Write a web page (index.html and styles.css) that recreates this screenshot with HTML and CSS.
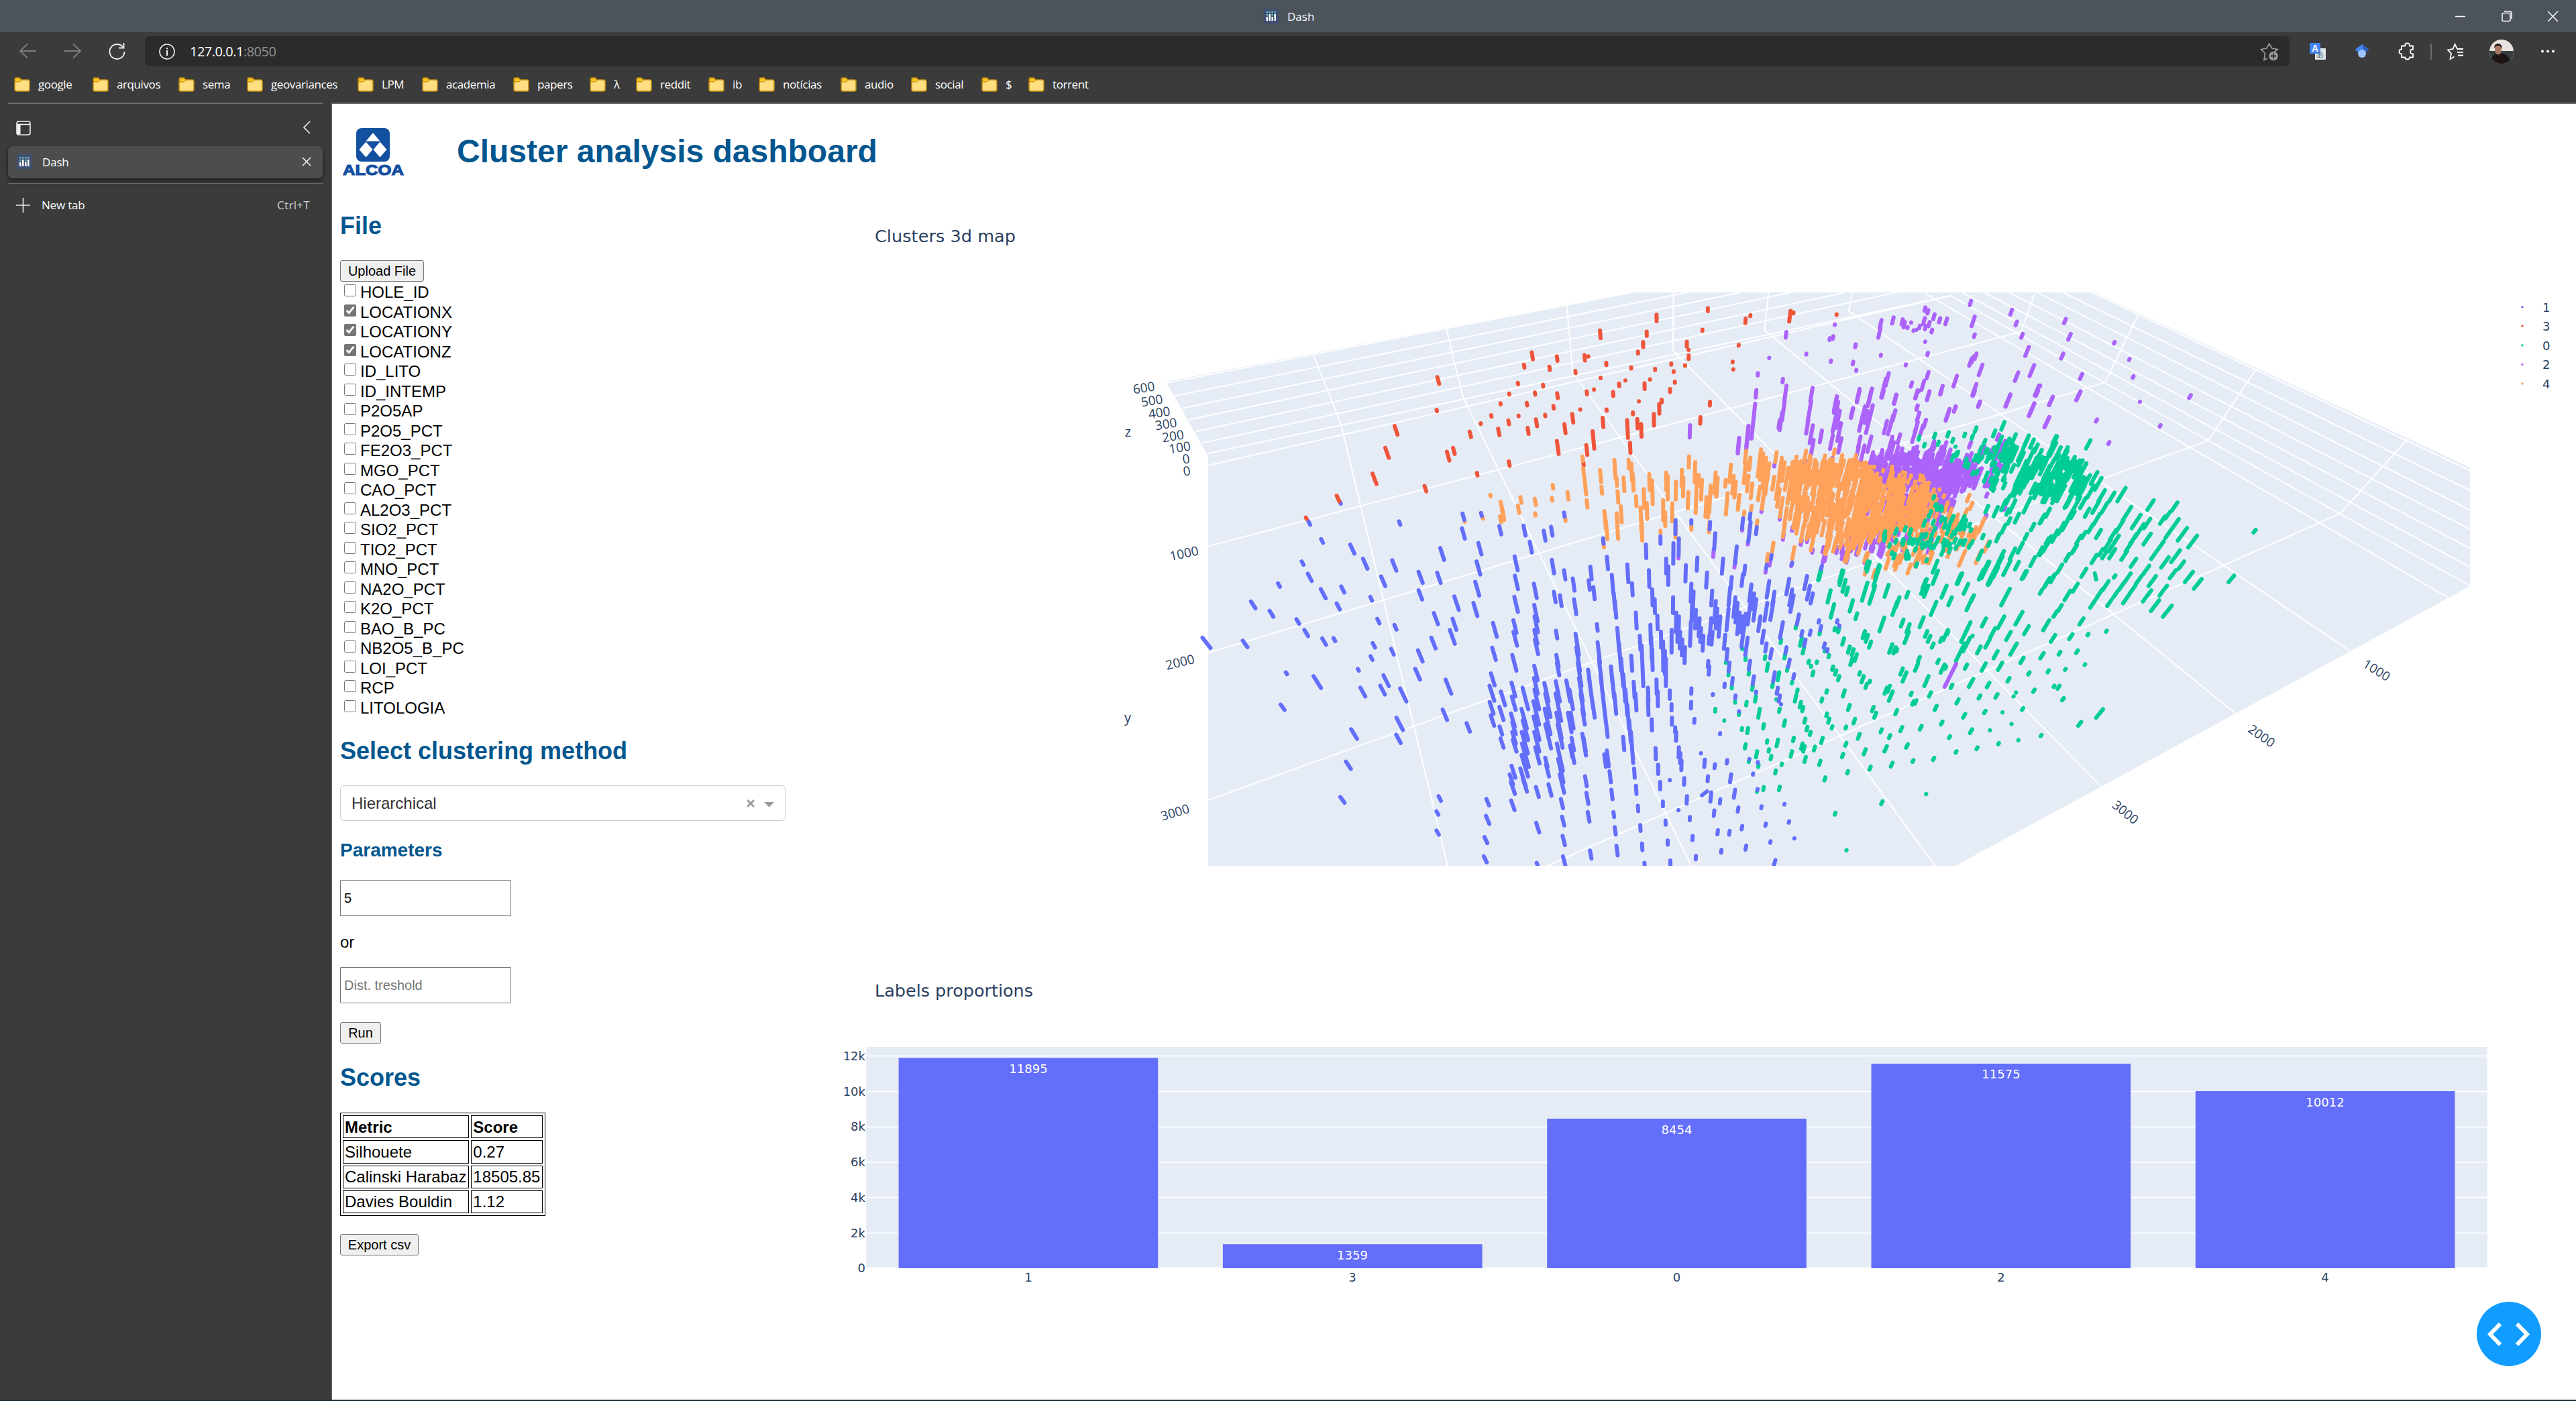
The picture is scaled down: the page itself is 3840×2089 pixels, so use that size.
FILE: index.html
```html
<!DOCTYPE html>
<html lang="en">
<head>
<meta charset="utf-8">
<title>Dash</title>
<link rel="stylesheet" href="styles.css">
</head>
<body>
<svg class="defs" width="0" height="0">
  <symbol id="folder" viewBox="0 0 24 22"><path d="M1 3.5Q1 1 3 1h5l3 3h9.500q2.500 0 2.500 2.500v12q0 2.500-2.500 2.500h-17Q1 21 1 18.500z" fill="#ffdf82" stroke="#c08a0c" stroke-width="1.500"/><path d="M1.500 6V3.500Q1.500 1.500 3.500 1.500H8l3 3L8.500 7H2z" fill="#ffca28" stroke="#b07c00" stroke-width="1"/></symbol>
  <symbol id="dash" viewBox="0 0 22 22"><rect width="22" height="22" rx="1" fill="#3f4f75"/><g fill="#6bb8a8"><rect x="4" y="4" width="2.500" height="2.500"/><rect x="8" y="4" width="2.500" height="2.500"/><rect x="12" y="4" width="2.500" height="2.500"/><rect x="16" y="4" width="2.500" height="2.500"/><rect x="4" y="8" width="2.500" height="2.500"/><rect x="12" y="8" width="2.500" height="2.500"/></g><g fill="#fff"><rect x="4" y="12" width="2.500" height="6"/><rect x="8" y="8" width="2.500" height="10"/><rect x="12" y="12" width="2.500" height="6"/><rect x="16" y="8" width="2.500" height="10"/></g></symbol>
</svg>
<header class="titlebar">
  <span class="win-title"><svg width="23" height="22"><use href="#dash"/></svg>Dash</span>
  <svg class="win-buttons" width="160" height="20" viewBox="3657 13 160 20" fill="none" stroke="#fff" stroke-width="1.500"><path d="M3660 23.500h15M3798 16l15 15M3813 16l-15 15"/><rect x="3730" y="18.500" width="12" height="12" rx="2"/><path d="M3733 16h8q3 0 3 3v8"/></svg>
</header>
<nav class="toolbar">
  <svg class="nav-icons" width="188" height="46" viewBox="0 54 188 46" fill="none" stroke="#f2f2f2" stroke-width="1.800"><g stroke="#7d7d7d"><path d="M41 65.500L30 76l11 10.500M30 76h24M109 65.500L120 76l-11 10.500M120 76H96"/></g><path d="M183 70a11 11 0 1 0 2.500 7M184.500 64v7.500H177"/></svg>
  <div class="address">
    <svg width="24" height="24" viewBox="0 0 24 24" fill="none" stroke="#f2f2f2" stroke-width="1.600"><circle cx="12" cy="12" r="11"/><path d="M12 10v8M12 6v2.200" stroke-width="2"/></svg>
    <span class="url">127.0.0.1<i>:8050</i></span>
    <svg class="fav" width="28" height="28" viewBox="3369 63 28 28"><path d="M3390 76l5-4.500-8-1.300-4.500-7L3379 70l-8.500 1.500 6 6-1.500 10 5-2.500" transform="translate(0 2)" fill="none" stroke="#9a9a9a" stroke-width="1.700"/><circle cx="3389" cy="83.500" r="6.800" fill="#9a9a9a"/><path d="M3385 83.500h8M3389 79.500v8" stroke="#2b2b2b" stroke-width="1.800"/></svg>
  </div>
  <svg class="actions" width="427" height="46" viewBox="3413 54 427 46">
    <rect x="3451" y="72" width="16" height="17" rx="1" fill="#dfe3e6"/><rect x="3443" y="64" width="16" height="16" rx="1" fill="#4285f4"/>
    <text x="3446" y="77" font-size="14" font-weight="700" fill="#fff" font-family="Liberation Sans, sans-serif">A</text><text x="3453" y="86" font-size="11" fill="#4d7184" font-family="Noto Sans CJK JP, sans-serif">あ</text>
    <path d="M3521 66l10.500 8-10.500 8-10.500-8z" fill="#4285f4"/><path d="M3521 66l10.500 8-6 5z" fill="#2f62c0"/><circle cx="3521" cy="80" r="6" fill="#a0c3ff"/>
    <path d="M3580 69h5q0-4 3.500-4t3.500 4h5v5q-4 0-4 3.500t4 3.500v5h-5q0 3-3.500 3t-3.500-3h-5v-5q-3.500 0-3.500-3.500t3.500-3.500z" transform="translate(0 -.5)" fill="none" stroke="#fff" stroke-width="1.800"/>
    <path d="M3624 65v24" stroke="#6c6c6c" stroke-width="2"/>
    <path d="M3668 73h-5l-3.500-7-3 7-7.500 1.500 5 5.500-1.500 8 6-3.500M3664 73h8M3663 78h9M3664 82.500h8" fill="none" stroke="#fff" stroke-width="1.800"/>
    <clipPath id="av"><circle cx="3729" cy="77" r="18"/></clipPath>
    <g clip-path="url(#av)"><rect x="3711" y="59" width="36" height="36" fill="#e9e2de"/><rect x="3711" y="76" width="36" height="20" fill="#35403e"/><path d="M3713 96q0-15 10-16h9q10 3 10 16z" fill="#1d1513"/><ellipse cx="3724" cy="74" rx="5" ry="8" fill="#a97862"/><path d="M3718 72q0-7 6-7t5.500 8q-2-5-5.500-5t-6 4zM3720 79q4 5 8 0v5h-8z" fill="#231a17"/></g>
    <g fill="#fff"><circle cx="3790" cy="76.500" r="2"/><circle cx="3798" cy="76.500" r="2"/><circle cx="3806" cy="76.500" r="2"/></g>
  </svg>
</nav>
<nav class="bookmarks">
  <a><svg><use href="#folder"/></svg>google</a><a><svg><use href="#folder"/></svg>arquivos</a><a><svg><use href="#folder"/></svg>sema</a><a><svg><use href="#folder"/></svg>geovariances</a><a><svg><use href="#folder"/></svg>LPM</a><a><svg><use href="#folder"/></svg>academia</a><a><svg><use href="#folder"/></svg>papers</a><a><svg><use href="#folder"/></svg>λ</a><a><svg><use href="#folder"/></svg>reddit</a><a><svg><use href="#folder"/></svg>ib</a><a><svg><use href="#folder"/></svg>notícias</a><a><svg><use href="#folder"/></svg>audio</a><a><svg><use href="#folder"/></svg>social</a><a><svg><use href="#folder"/></svg>$</a><a><svg><use href="#folder"/></svg>torrent</a>
</nav>
<div class="window">
  <aside class="tabs">
    <div class="tabs-head">
      <svg width="22" height="22" viewBox="0 0 22 22" fill="none" stroke="#f0f0f0" stroke-width="1.600"><rect x="1" y="1" width="20" height="20" rx="3"/><path d="M1 5.500h20"/><path d="M4 5v15" stroke-width="5"/></svg>
      <svg width="12" height="20" fill="none" stroke="#e8e8e8" stroke-width="1.700"><path d="M11 1L2 10l9 9"/></svg>
    </div>
    <div class="tab"><svg width="22" height="22"><use href="#dash"/></svg><span>Dash</span><svg class="x" width="14" height="14" stroke="#f0f0f0" stroke-width="1.700"><path d="M1 1l12 12M13 1L1 13"/></svg></div>
    <div class="newtab"><svg width="21" height="22" stroke="#eee" stroke-width="1.600"><path d="M10.500 0v22M0 11h21"/></svg><span>New tab</span><em>Ctrl+T</em></div>
  </aside>
  <main class="page">
    <div class="page-head">
      <svg class="logo" width="96" height="76" viewBox="509 190 96 76"><rect x="531" y="191" width="50" height="50" rx="8" fill="#1450a0"/><path d="M556 198l10.500 12.500h-21zM545.500 211.500l10 11.500-10 11.500-10-11.500zM566.500 211.500l10 11.500-10 11.500-10-11.500z" fill="#fff"/><text x="511" y="260.500" textLength="91" lengthAdjust="spacingAndGlyphs" font-size="22" stroke="#1450a0" stroke-width="1.200" fill="#1450a0">ALCOA</text></svg>
      <h1>Cluster analysis dashboard</h1>
    </div>
    <div class="columns">
      <section class="controls">
        <h2>File</h2>
        <button class="upload">Upload File</button>
        <div class="checks">
          <label><input type="checkbox">HOLE_ID</label><label><input type="checkbox" checked>LOCATIONX</label><label><input type="checkbox" checked>LOCATIONY</label><label><input type="checkbox" checked>LOCATIONZ</label><label><input type="checkbox">ID_LITO</label><label><input type="checkbox">ID_INTEMP</label><label><input type="checkbox">P2O5AP</label><label><input type="checkbox">P2O5_PCT</label><label><input type="checkbox">FE2O3_PCT</label><label><input type="checkbox">MGO_PCT</label><label><input type="checkbox">CAO_PCT</label><label><input type="checkbox">AL2O3_PCT</label><label><input type="checkbox">SIO2_PCT</label><label><input type="checkbox">TIO2_PCT</label><label><input type="checkbox">MNO_PCT</label><label><input type="checkbox">NA2O_PCT</label><label><input type="checkbox">K2O_PCT</label><label><input type="checkbox">BAO_B_PC</label><label><input type="checkbox">NB2O5_B_PC</label><label><input type="checkbox">LOI_PCT</label><label><input type="checkbox">RCP</label><label><input type="checkbox">LITOLOGIA</label>
        </div>
        <h2 class="method">Select clustering method</h2>
        <div class="select"><span>Hierarchical</span><svg width="42" height="16" viewBox="0 0 42 16"><path d="M2 3l10 10M12 3L2 13" stroke="#999" stroke-width="2.600"/><path d="M27 6h15l-7.500 7.500z" fill="#999"/></svg></div>
        <h3>Parameters</h3>
        <input class="field" value="5">
        <p>or</p>
        <input class="field" placeholder="Dist. treshold">
        <button class="run">Run</button>
        <h2 class="scores">Scores</h2>
        <table>
          <tr><th>Metric</th><th>Score</th></tr>
          <tr><td>Silhouete</td><td>0.27</td></tr>
          <tr><td>Calinski Harabaz</td><td>18505.85</td></tr>
          <tr><td>Davies Bouldin</td><td>1.12</td></tr>
        </table>
        <button class="export">Export csv</button>
      </section>
      <section class="charts">
        <svg class="map" width="2640" height="1120" viewBox="1200 316 2640 1120">
          <text x="1304" y="361" class="title" textLength="210">Clusters 3d map</text>
          <clipPath id="scene"><rect x="1600" y="436" width="2200" height="855"/></clipPath>
          <path d="M1738 569L2429 436H3122L3682 697V874L2915 1291H1801V680z" fill="#e5ecf6"/>
          <g id="grid" clip-path="url(#scene)" stroke="#fff" stroke-width="2" fill="none">
            <path d="M1739 571L2432 436M1750 590.500L2516 436M1761.500 609L2594.500 436M1771.500 626L2670 436M1782 643.500L2751 436M1792 660.500L2827 436M1801 676L2908 441L3137 570.500L3292 657L3488 766L3682 873.500"/>
            <path d="M1957 527.500L1998.500 631L2158 1291M2155.500 488.500L2181 592L2521 1291M2335.500 456L2344.500 556L2885 1291M2494.500 436L2494 523L3132 1172.500M2636.500 436L2630.500 492.500L3332.500 1064M2760.500 436L2756 464L3503.500 971M2871 436V438.500L3040 536.500L3651 892"/>
            <path d="M1801 694L2908 441M1801 814.500L3013 494.500L3033 438M1801 973.500L3137.500 570.500L3188 468M1801 1193L3292 657L3364 549M2300 1294L3488 766L3589.500 654"/>
            <path d="M3118 436L3682 701.500M3075 436L3682 731M3037 436L3682 760.500M2995 436L3682 789M2958 436L3682 817.500M2925 436L3682 845.500"/>
          </g>
          <g id="traces" clip-path="url(#scene)" fill="none" stroke-linecap="round" stroke-width="6"></g>
          <g class="tick3d">
            <text transform="translate(1705 578) rotate(-9)" dy="7">600</text><text transform="translate(1717 597) rotate(-9)" dy="7">500</text><text transform="translate(1728 615) rotate(-9)" dy="7">400</text><text transform="translate(1738 632) rotate(-9)" dy="7">300</text><text transform="translate(1748.500 650) rotate(-9)" dy="7">200</text><text transform="translate(1758.500 667) rotate(-9)" dy="7">100</text><text transform="translate(1768 684) rotate(-9)" dy="7">0</text><text transform="translate(1769 702) rotate(-9)" dy="7">0</text>
            <text transform="translate(1765 825) rotate(-12)" dy="7">1000</text><text transform="translate(1759 987) rotate(-14)" dy="7">2000</text><text transform="translate(1751.500 1211) rotate(-17)" dy="7">3000</text>
            <text transform="translate(3543 999) rotate(32)" dy="7">1000</text><text transform="translate(3371.500 1097) rotate(35)" dy="7">2000</text><text transform="translate(3168.500 1211) rotate(39)" dy="7">3000</text>
            <text x="1681.500" y="651" font-size="20">z</text><text x="1681" y="1077" font-size="20">y</text>
          </g>
          <circle cx="3760" cy="458" r="1.700" fill="#636efa"/><circle cx="3760" cy="486" r="1.700" fill="#ef553b"/><circle cx="3760" cy="515" r="1.700" fill="#00cc96"/><circle cx="3760" cy="543.500" r="1.700" fill="#ab63fa"/><circle cx="3760" cy="572" r="1.700" fill="#ffa15a"/>
          <g class="tick"><text x="3790" y="465">1</text><text x="3790" y="493">3</text><text x="3790" y="522">0</text><text x="3790" y="550">2</text><text x="3790" y="579">4</text></g>
        </svg>
        <svg class="bars" width="2640" height="560" viewBox="1200 1436 2640 560">
          <text x="1304" y="1486" class="title" textLength="236">Labels proportions</text>
          <rect x="1291.300" y="1561" width="2416.500" height="330" fill="#e5ecf6"/>
          <path d="M1291 1574.500H3708M1291 1627.500H3708M1291 1680.500H3708M1291 1733H3708M1291 1785.500H3708M1291 1838.500H3708M1291 1890.500H3708" stroke="#fff" stroke-width="1.500"/>
          <g fill="#636efa"><rect x="1339.600" y="1577.500" width="386.600" height="313.500"/><rect x="1822.900" y="1855.200" width="386.600" height="35.800"/><rect x="2306.200" y="1668" width="386.600" height="223"/><rect x="2789.500" y="1586" width="386.600" height="305"/><rect x="3272.800" y="1627" width="386.600" height="264"/></g>
          <g class="tick" text-anchor="end"><text x="1290" y="1581">12k</text><text x="1290" y="1634">10k</text><text x="1290" y="1686">8k</text><text x="1290" y="1739">6k</text><text x="1290" y="1792">4k</text><text x="1290" y="1845">2k</text><text x="1290" y="1897">0</text></g>
          <g class="tick" text-anchor="middle"><text x="1533" y="1911">1</text><text x="2016" y="1911">3</text><text x="2499.500" y="1911">0</text><text x="2983" y="1911">2</text><text x="3466" y="1911">4</text></g>
          <g class="tick value" text-anchor="middle"><text x="1533" y="1600">11895</text><text x="2016" y="1878">1359</text><text x="2499.500" y="1691">8454</text><text x="2983" y="1608">11575</text><text x="3466" y="1650">10012</text></g>
        </svg>
      </section>
    </div>
    <button class="devtools" aria-label="Developer tools"><svg width="96" height="96" fill="none" stroke="#fff" stroke-width="6"><path d="M35 33L20 48.500L35 64M60 33L75 48.500L60 64"/></svg></button>
  </main>
</div>
<div class="taskbar"></div>
<script src="traces.js"></script>
</body>
</html>
```
FILE: styles.css
```css
* { box-sizing: border-box; }
body { margin: 0; width: 3840px; height: 2089px; overflow: hidden; display: flex; flex-direction: column; background: #3b3b3b; font-family: "Liberation Sans", Arial, sans-serif; font-size: 24px; color: #000; }
.defs { position: absolute; }
.titlebar { height: 48px; flex: none; background: #4c535a; display: flex; align-items: center; justify-content: space-between; padding: 0 23px 0 1883px; color: #fff; font: 17px "Open Sans", sans-serif; }
.win-title { display: flex; align-items: center; gap: 13px; }
.toolbar { height: 57px; flex: none; display: flex; align-items: flex-start; padding-top: 6px; }
.nav-icons { margin-right: 28px; flex: none; }
.address { width: 3197px; height: 45px; flex: none; background: #2b2b2b; border-radius: 7px; display: flex; align-items: center; padding: 0 16px 0 21px; font: 20px "Open Sans", sans-serif; color: #fff; }
.url { margin-left: 22px; letter-spacing: -.5px; }
.url i { color: #919191; font-style: normal; }
.fav { margin-left: auto; }
.bookmarks { height: 48px; flex: none; display: grid; grid-template-columns: 117px 128px 102px 165px 96px 136px 114px 69px 108px 75px 122px 105px 105px 70px 110px; padding: 6px 0 0 21px; align-items: start; font: 17px/30px "Open Sans", sans-serif; letter-spacing: -.4px; color: #fff; }
.bookmarks a { display: flex; align-items: center; gap: 12px; white-space: nowrap; }
.bookmarks svg { width: 24px; height: 22px; flex: none; }
.window { flex: 1; display: flex; min-height: 0; }
.tabs { width: 495px; flex: none; padding: 0 13px 0 12px; font: 17px "Open Sans", sans-serif; color: #fff; border-right: 1px solid #6b6b6b; letter-spacing: -.2px; }
.tabs-head { height: 65px; border-top: 2px solid #6b6b6b; display: flex; justify-content: space-between; padding: 25px 18px 0 12px; }
.tab { height: 48px; background: #4d4d4d; border-radius: 7px; box-shadow: 0 3px 6px #1d1d1d; display: flex; align-items: center; padding: 0 17px 2px 13px; }
.tab span { margin-left: 16px; }
.tab .x { margin-left: auto; }
.newtab { margin-top: 7px; border-top: 1px solid #6b6b6b; height: 64px; display: flex; align-items: center; padding: 0 19px 0 12px; }
.newtab span { margin-left: 17px; }
.newtab em { margin-left: auto; font-style: normal; color: #cfcfcf; letter-spacing: .3px; }
.page { position: relative; flex: 1; background: #fff; border-top: 2px solid #6b6b6b; padding-left: 12px; }
.page-head { height: 161px; display: flex; align-items: flex-start; padding: 35px 0 0 2px; }
.logo { flex: none; margin-right: 76px; font-family: "Liberation Sans", sans-serif; font-weight: 700; }
h1, h2, h3 { margin: 0; color: #00568f; font-weight: 700; }
h1 { font-size: 48px; line-height: 56px; margin-top: 8px; }
h2 { font-size: 36px; line-height: 42px; }
h3 { font-size: 28px; line-height: 32px; margin: 28px 0 28px; }
.columns { display: flex; }
.controls { width: 693px; flex: none; display: flex; flex-direction: column; align-items: flex-start; }
button { font: 20px "Liberation Sans", sans-serif; color: #000; background: #efefef; border: 1.500px solid #767676; border-radius: 3px; height: 32px; padding: 0; line-height: 28px; }
.upload { width: 125px; margin: 30px 0 1px; }
.checks label { display: flex; align-items: center; height: 29.500px; line-height: 29.500px; }
.checks input { width: 18px; height: 18px; margin: 0 6px 5px; accent-color: #767676; }
.method { margin: 29px 0 30px; }
.select { width: 664px; height: 53px; border: 1.500px solid #ccc; border-radius: 6px; display: flex; align-items: center; justify-content: space-between; padding: 0 16px; color: #333; }
.field { width: 255px; height: 54px; border: 1.500px solid #767676; border-radius: 1px; padding: 0 5px; font: 20px "Liberation Sans", sans-serif; color: #000; }
.field::placeholder { color: #757575; }
p { margin: 25px 0 23px; line-height: 28px; }
.run { width: 61px; margin: 28px 0 30px; }
table { width: 306px; height: 154px; margin: 31px 0 27px; border: 1px solid #000; border-spacing: 3px; white-space: nowrap; }
th, td { border: 1px solid #000; padding: 1px 2px; text-align: left; line-height: 27px; }
.export { width: 117px; }
.charts { width: 2640px; flex: none; display: flex; flex-direction: column; }
.charts svg { flex: none; display: block; }
.title { font: 25.500px "DejaVu Sans", Verdana, sans-serif; fill: #2a3f5f; }
.tick { font: 18px "DejaVu Sans", Verdana, sans-serif; fill: #2a3f5f; }
.value { fill: #fff; }
.tick3d { font: 19px "Open Sans", sans-serif; fill: #2a3f5f; text-anchor: middle; }
.devtools { position: absolute; right: 52px; bottom: 50px; width: 96px; height: 96px; border: 0; border-radius: 50%; background: #119dff; }
.devtools svg { display: block; }
.taskbar { height: 2px; flex: none; background: #1b2c38; }
```
FILE: traces.js
```js
// Drill-hole intervals, stored as "x yTop yBottom" triples per scene tile.
// Each tile has its own origin and horizontal / vertical scale.
const tiles = {
  west: [1640, 400, 2.24, 1.7422],
  mid: [2340, 400, 2.24, 1.7422],
  east: [3040, 400, 1.96, 1.7422],
  core: [2590, 580, 3, 3]
};
const colors = { blue: '#636efa', red: '#ef553b', green: '#00cc96', purple: '#ab63fa', orange: '#ffa15a' };
// All vertical holes converge on this point of the projection.
const VX = 2485, VY = 1850, CAP = 2.6;

function segment(tile, x, a, b) {
  const [ox, oy, sx, sy] = tiles[tile];
  const cx = ox + x / sx;
  let y1 = oy + a / sy + CAP, y2 = oy + b / sy - CAP;
  if (y2 < y1 + 0.3) { y1 = (y1 + y2) / 2; y2 = y1 + 0.3; }
  const cy = (y1 + y2) / 2, k = (VX - cx) / (VY - cy);
  return `M${(cx + (y1 - cy) * k).toFixed(1)} ${y1.toFixed(1)}L${(cx + (y2 - cy) * k).toFixed(1)} ${y2.toFixed(1)}`;
}
function add(color, d) {
  const p = document.createElementNS('http://www.w3.org/2000/svg', 'path');
  p.setAttribute('stroke', colors[color]);
  p.setAttribute('d', d);
  document.getElementById('traces').appendChild(p);
}
function draw(tile, color, text) {
  add(color, text.split(',').map(s => segment(tile, ...s.trim().split(' ').map(Number))).join(''));
}
let seed = 11;
const rnd = () => (seed = (seed * 16807) % 2147483647) / 2147483647;
function inside(x, y, poly) {
  let r = false;
  for (let i = 0, j = poly.length - 1; i < poly.length; j = i++) {
    const [xi, yi] = poly[i], [xj, yj] = poly[j];
    if ((yi > y) !== (yj > y) && x < (xj - xi) * (y - yi) / (yj - yi) + xi) r = !r;
  }
  return r;
}
function fill(color, poly, count, min, max) {
  const xs = poly.map(p => p[0]), ys = poly.map(p => p[1]);
  const x0 = Math.min(...xs), x1 = Math.max(...xs), y0 = Math.min(...ys), y1 = Math.max(...ys);
  let d = '', n = 0;
  while (n < count) {
    const x = x0 + rnd() * (x1 - x0), y = y0 + rnd() * (y1 - y0);
    if (!inside(x, y, poly)) continue;
    const h = min + rnd() * (max - min);
    d += segment('core', x, y - h / 2, y + h / 2);
    n++;
  }
  add(color, d);
}

draw('west', 'orange', '1303 584 597,1342 602 645,1345 620 658,1337 640 664,1405 590 614,1397 612 640,1453 594 620,1453 632 647,1512 558 577,1509 592 608,1562 577 605,1217 650 663,1277 640 655,1553 640 661');
draw('west', 'blue', '802 602 616,698 652 671,741 699 718,842 713 746,1000 653 671,885 750 785,676 757 775,700 789 817,597 814 832,511 861 888,572 885 910,745 829 862,810 822 847,795 866 891,945 796 830,982 754 790,905 849 868,1142 722 762,1131 786 822,1070 784 822,1069 832 865,1213 633 658,1273 631 648,1213 671 707,1268 709 748,1263 757 800,1259 810 855,1253 865 908,1336 665 696,1417 664 699,1438 706 743,1484 677 712,1508 667 699,1550 630 650,1389 744 789,1390 794 838,1389 849 897,1453 815 861,1455 870 922,1456 900 950,1455 935 980,1457 960 1007,1512 753 797,1551 780 813,1518 836 872,1538 845 882,1524 937 966,1190 848 892,1121 891 929,1183 906 944,1176 935 980,1113 955 992,1069 988 1026,1060 1036 1073,929 906 927,986 922 943,914 969 990,976 984 1008,906 1003 1022,862 1036 1050,877 1085 1117,955 1053 1090,943 1080 1112,1012 1087 1130,1000 1163 1204,996 1207 1238,848 1193 1227,829 1277 1305,809 1369 1393,725 1055 1095,622 1045 1059,609 1129 1152,355 955 991,484 963 989,660 907 928,688 935 960,748 957 983,782 956 973,1163 1064 1110,1151 1142 1178,1229 1177 1208,1318 917 962,1315 981 1022,1311 1048 1088,1308 1080 1128,1307 1122 1162,1310 1157 1193,1345 1095 1140,1340 1135 1178,1338 1186 1216,1342 1217 1250,1385 910 952,1386 940 985,1383 1000 1050,1380 1072 1117,1381 1108 1152,1378 1152 1195,1382 1175 1215,1382 1200 1240,1384 1220 1260,1380 1288 1328,1373 1310 1345,1378 1330 1370,1378 1378 1412,1420 1085 1150,1416 1140 1200,1420 1170 1230,1418 1200 1265,1420 1230 1300,1418 1260 1325,1412 1295 1350,1418 1320 1364,1455 1028 1075,1455 1060 1110,1458 1090 1150,1456 1120 1190,1457 1160 1230,1458 1200 1260,1460 1240 1291,1460 1343 1378,1461 1436 1470,1460 1540 1560,1490 1073 1130,1495 1100 1170,1494 1140 1215,1496 1180 1252,1490 1267 1300,1494 1285 1325,1502 1336 1375,1527 1000 1040,1529 1020 1062,1528 1068 1130,1530 1100 1180,1532 1150 1225,1536 1180 1250,1535 1230 1310,1538 1270 1340,1542 1310 1367,1542 1374 1407,1546 1420 1452,1548 1470 1503,1550 1523 1560,1134 1367 1388,1126 1406 1424,1127 1456 1476,1294 1374 1400,1294 1418 1448,1288 1473 1498,1286 1523 1548,1563 1066 1130,1568 1150 1210');
draw('west', 'red', '1129 278 305,1124 363 376,988 405 437,958 462 497,916 529 565,1086 561 584,1162 472 504,1181 462 487,1236 420 443,1271 398 409,1306 377 390,1331 412 438,1337 346 358,1366 321 333,1364 391 410,1395 293 306,1397 378 389,1416 246 263,1443 214 241,1425 345 361,1429 410 435,1452 318 333,1457 388 415,1479 298 312,1486 376 389,1501 251 269,1526 224 245,1527 320 342,1514 353 369,1552 400 433,1528 444 487,1366 497 518,1259 527 543,794 586 610,688 643 656');
draw('mid', 'red', '461 99 116,290 116 142,257 160 180,245 187 209,102 157 186,50 221 244,62 224 234,19 262 277,122 241 256,228 212 226,205 253 265,186 288 295,165 295 311,145 317 336,103 280 290,81 310 320,57 315 332,35 362 372,250 294 318,268 284 293,285 257 269,231 341 350,211 370 384,123 362 375,111 384 417,10 374 405,79 419 473,57 455 489,193 390 445,226 387 420,239 400 442,281 374 413,307 337 353,299 348 382,335 309 326,351 290 302,347 263 274,339 243 255,385 247 258,397 207 217,391 186 208,397 222 240,443 155 167,587 126 147,603 117 129,735 106 143,747 110 122,891 115 126,564 194 206,544 238 249,546 258 267,468 342 361,436 382 408,202 449 484,46 500 517');
draw('mid', 'purple', '401 403 444,563 436 485,722 161 185,666 228 238,628 268 283,711 283 301,622 312 340,613 347 447,593 405 480,720 300 350,713 340 400,705 370 425,699 390 420,807 306 350,800 340 405,793 390 434,887 330 380,893 365 420,790 217 229,885 141 152,868 177 191,879 172 188,872 235 248,954 193 210,946 238 254,957 259 271,1039 220 232,1038 130 160,1034 150 185,1079 123 148,1110 128 150,1117 135 158,1128 148 160,1140 136 146,1148 157 167,1158 155 164,1168 145 160,1186 97 115,1196 104 122,1183 125 150,1188 145 163,1200 135 155,1216 115 137,1209 155 171,1235 125 145,1257 126 150,1187 186 196,1195 215 230,1122 245 257,1338 80 100,1347 121 155,1351 167 183,1345 225 250,1355 217 240,1338 230 258,1372 246 282,1287 275 312,1351 296 335,1367 342 364,1241 301 332,1195 265 290,1179 288 320,1158 312 342,1141 292 312,1197 315 347,1160 352 372,1262 362 398,1286 354 377,1474 103 125,1491 134 153,1510 166 185,1527 200 232,1543 247 285,1492 266 297,1463 323 364,1542 346 388,1560 300 335,1060 268 310,1048 282 340,963 309 350,1003 308 360,942 359 392,1086 324 356,480 725 754,363 745 758,551 755 782,576 670 686,595 705 722,668 755 777,654 780 795,740 765 778,848 740 768,773 700 722,926 745 769');
draw('core', 'purple', '44 158 270,5 212 296,330 155 250,335 220 300,373 178 246,438 25 105,445 50 120,450 90 180,432 120 200,455 145 240,420 200 276,458 212 292,540 0 68,590 0 85,513 78 137,563 70 150,575 90 160,552 110 195,597 65 150,583 120 205,650 0 46,706 18 74,700 88 150,685 110 210,662 135 206,812 0 18,800 0 50,853 5 55,910 0 32,803 67 100,808 98 150,800 140 200,790 170 245,838 130 180,824 155 210,940 82 150,972 72 108,1058 0 38,1080 48 88,1210 18 86,1340 0 38,1316 58 128,1402 28 80,1384 118 178,1525 5 58,545 205 270,535 250 330,560 245 330,590 205 290,600 275 340,640 265 340,685 205 280,690 230 320,665 270 340,722 195 250,710 250 330,800 250 290,870 225 300,925 230 300,1165 195 235,1100 250 290,1210 260 310,1080 280 340,1190 330 370,880 240 280,1040 230 270,300 310 355,422 300 350,165 330 355,1195 520 548,1110 555 588,1115 460 490,205 640 682,285 670 705,335 710 740,392 740 778,470 720 768,445 700 742,540 700 748,605 700 735,190 560 592,108 530 558,245 610 642,312 660 692,383 700 738,572 740 786');
fill('purple', [[580,330],[660,300],[800,295],[950,290],[1040,340],[1100,370],[1040,440],[960,460],[860,450],[560,400]], 215, 30, 85);
fill('purple', [[640,500],[1000,430],[960,560],[860,720],[640,730],[460,740],[480,600]], 130, 30, 70);
fill('purple', [[980,320],[1200,240],[1210,340],[1120,440],[1040,440]], 26, 30, 60);
draw('mid', 'orange', '43 484 505,46 515 540,52 540 592,58 598 626,103 520 560,107 563 590,151 494 550,157 540 570,161 575 613,197 493 525,207 503 555,212 530 582,181 539 583,222 588 622,118 626 680,123 650 708,158 632 675,160 660 707,172 614 664,238 617 690,241 650 712,248 569 627,258 605 656,266 530 580,276 547 617,322 526 580,327 535 605,312 598 660,319 630 675,342 606 662,354 550 605,374 519 570,379 540 597,398 484 522,395 577 628,418 499 560,422 560 640,430 532 570,440 545 605,455 590 650,468 560 640,463 600 652,485 526 590,492 540 598,520 545 572,536 506 560,524 580 644,545 535 590,552 550 600,564 584 630,466 655 690,406 665 684,353 665 704,303 677 692,113 700 730,865 665 747,932 700 767,992 735 765,989 770 800,1016 780 808,1375 645 690,1365 730 770,1392 705 740,1430 690 705,1133 765 797,1060 750 785,1095 740 788,1165 725 780,1205 735 770,1310 730 777');
draw('core', 'orange', '36 268 340,33 320 428,55 300 370,46 380 465,63 415 495,98 262 400,108 280 415,120 300 450,138 325 410,128 400 480,96 430 505,115 440 545,5 468 548,172 275 335,192 300 400,205 320 420,160 385 458,178 400 500,220 345 460,183 440 535,230 420 520,255 295 420,270 315 500,245 400 500,196 480 580,215 525 620,208 590 670,303 268 330,318 290 380,240 500 590,255 550 630,270 560 655,290 600 690,315 600 680,340 600 730,382 290 400,340 310 420,405 305 420,433 263 300,460 288 380,525 288 350,400 650 745,490 680 780,455 620 690,158 680 735,134 730 780,250 700 768,573 728 780,545 690 745,30 540 570,62 515 550,88 580 615,54 605 640,1032 466 510,1020 530 580,1045 500 545,1165 650 670');
fill('orange', [[240,330],[330,330],[400,340],[520,330],[640,390],[740,400],[850,460],[900,510],[800,610],[640,650],[500,660],[420,620],[340,640],[270,560],[240,450]], 340, 45, 95);
fill('orange', [[540,330],[620,320],[740,360],[900,410],[930,480],[840,480],[700,400],[560,370]], 34, 16, 28);
fill('orange', [[660,560],[900,460],[960,540],[1000,580],[1080,590],[1070,690],[960,740],[820,790],[660,780]], 90, 25, 60);
fill('orange', [[400,600],[640,600],[620,690],[480,710],[400,700]], 24, 50, 90);
fill('green', [[650,650],[850,590],[1000,570],[1060,580],[1050,700],[960,730],[800,790],[660,740]], 72, 22, 40);
fill('green', [[860,470],[930,470],[940,500],[880,600],[850,590]], 9, 18, 26);
fill('green', [[980,260],[1200,230],[1210,330],[1200,440],[1110,460],[1030,400],[960,320]], 44, 22, 40);
fill('green', [[1150,250],[1300,240],[1420,270],[1555,330],[1555,440],[1450,480],[1330,470],[1230,450],[1210,350]], 86, 45, 85);
draw('core', 'green', '812 205 235,836 238 265,882 192 225,898 228 258,942 185 220,963 216 245,975 250 265,962 288 330,1016 192 220,1065 164 200,1050 200 230,1148 178 220,1187 140 190,1105 220 255,1175 205 260,1155 250 320,1235 195 255,1220 240 300,1293 200 260,1335 240 290,1418 205 265,1400 250 300,1462 268 320,1505 315 360,1550 325 380,1210 470 520,1190 490 550,1155 520 578,1230 490 560,1208 530 570,1250 550 605,1295 480 560,1115 515 560,1320 595 640,1290 640 680,1265 680 740,1230 705 770,1205 760 840,1165 640 690,1190 600 650,1215 570 610,1360 560 610,1385 660 700,1355 700 750,1320 745 800,1455 590 630,1425 625 665,1395 650 700,1510 690 735,1475 730 775,1410 825 860,1380 850 895,1175 740 800,1155 790 850,1130 830 885,1115 765 810,1090 800 860,1250 765 815,1280 808 858,1125 675 710,1085 715 770,1098 645 675,990 820 880,885 805 880,835 845 900,465 805 885,370 800 860,585 765 825,625 780 850,1480 480 535,1530 420 480,1380 470 515,1420 440 500,1500 540 585,1545 480 540,1555 560 580,1340 420 490');
draw('mid', 'green', '834 775 815,905 780 820,916 805 845,926 825 853,866 832 873,877 868 912,940 858 896,957 892 916,992 757 785,1025 768 830,985 812 868,1010 820 876,1058 818 858,1085 862 905,1095 850 885,1127 836 860,1042 903 948,1110 908 935,1125 940 978,1130 920 950,1183 803 850,1190 820 858,1175 902 937,1215 862 905,1250 820 860,1303 788 825,1270 850 880,1323 815 850,1335 850 893,1220 755 795,1345 845 870,1388 758 810,1410 770 825,1425 750 800,1440 730 770,1455 828 880,1520 782 810,1500 888 930,1525 925 955,1440 900 940,1465 940 970,1412 930 965,1482 970 1008,1383 905 935,1366 978 1005,1395 960 990,1422 990 1018,1510 1007 1030,1533 1045 1060,1465 1060 1078,1437 1020 1048,1382 1022 1050,1340 1062 1092,1368 1105 1122,1397 1072 1093,1425 1102 1120,1482 1108 1116,1490 1099 1105,1550 1090 1105,1512 1138 1152,1445 1150 1157,1386 1145 1160,1403 1197 1203,1475 1180 1187,1340 1193 1212,1317 1153 1172,1295 1115 1135,1275 1077 1095,1268 1211 1225,1242 1173 1190,1222 1132 1152,1203 1097 1117,1187 1070 1090,1290 1250 1263,1215 1267 1282,1172 1184 1203,1126 1232 1250,1146 1273 1287,1360 1240 1254,1432 1229 1241,1498 1221 1231,1190 1361 1371,1042 1380 1397,924 1507 1516,886 1410 1424,852 1318 1335,928 1302 1317,1003 1290 1307,1075 1280 1299,985 1245 1267,1055 1237 1260,1068 1208 1225,1107 1187 1207,1090 1143 1163,1155 1118 1136,1146 1120 1138,1140 1098 1113,1118 1045 1078,1108 1035 1060,1158 1022 1050,1166 1005 1025,1195 1055 1075,1230 1012 1030,1245 1025 1055,1255 1030 1045,1240 955 975,1255 935 970,1262 940 955,1200 950 975,1212 970 990,1190 938 962,1318 930 975,1330 915 950,1345 950 960,1304 970 1025,1325 955 1000,1323 1025 1045,1072 972 1003,1085 980 1005,1092 985 1000,1065 1080 1105,1072 1095 1128,1055 1085 1110,1040 1193 1210,1020 1150 1172,1012 1135 1155,968 1045 1060,978 1055 1080,990 1075 1095,1002 1067 1080,982 938 965,992 948 975,1003 965 990,913 957 982,932 978 1003,945 985 1010,955 998 1025,940 1010 1035,878 1030 1048,888 1040 1060,898 1055 1075,915 1092 1117,932 1130 1152,950 1166 1187,922 1186 1200,965 1205 1227,922 1228 1245,911 1257 1275,842 1215 1238,876 1185 1200,858 1152 1168,865 1165 1185,858 1092 1107,842 1113 1130,825 1017 1030,812 1043 1062,806 1028 1040,798 1015 1030,772 955 985,780 980 1005,705 960 978,718 1000 1018,727 1030 1050,660 1022 1050,652 1003 1020,598 1045 1060,587 1008 1022,576 983 994,521 1020 1029,530 1050 1062,541 1083 1096,610 1080 1100,620 1108 1130,590 1122 1140,552 1122 1133,565 1150 1165,516 1170 1180,486 1140 1156,575 1190 1204,594 1190 1212,586 1232 1252,632 1140 1172,647 1180 1200,659 1222 1237,665 1245 1260,672 1262 1280,624 1250 1275,598 1275 1287,630 1285 1300,687 1300 1317,708 1282 1295,700 1342 1360,647 1343 1360,625 1355 1365,693 1220 1246,717 1170 1193,700 1140 1157,697 1045 1075,677 1075 1092,690 1115 1125,742 1070 1083,760 1090 1105,754 1105 1130,770 1122 1145,778 1135 1155,785 1165 1185,792 1187 1205,803 1200 1217,747 1215 1233,740 1250 1273,775 1230 1253,782 1237 1260,786 1265 1287,817 1238 1257,835 1275 1295,885 930 945,898 930 950,852 985 1000,865 1000 1015,1405 800 825,755 925 940,835 940 955');
draw('mid', 'purple', '1271 1023 1092');
draw('mid', 'blue', '112 697 720,303 692 720,353 650 695,406 650 668,468 655 683,484 684 735,364 697 750,346 710 772,255 713 757,126 745 786,577 645 680,602 632 657,600 655 715,623 668 695,673 740 760,657 765 785,742 760 775,555 718 770,584 768 800,576 790 830,510 750 798,425 747 790,387 767 818,322 750 797,329 770 827,194 765 820,209 814 854,265 780 832,71 771 812,65 806 840,81 824 864,13 801 842,18 855 903,143 792 850,149 840 890,153 860 912,222 890 940,276 830 880,284 855 900,293 898 942,345 850 900,457 786 834,405 815 870,412 835 905,408 860 920,474 833 880,485 860 925,490 880 940,500 900 962,539 798 840,533 825 880,550 850 910,557 865 925,527 880 945,563 890 955,572 900 950,603 817 870,612 840 890,618 855 920,598 870 930,583 893 955,662 808 860,680 836 880,675 860 918,655 865 920,633 900 947,728 802 852,738 830 880,742 845 897,788 795 838,797 820 865,808 840 875,645 937 978,707 915 965,762 895 930,576 945 988,590 955 1010,517 948 993,525 985 1022,470 905 960,475 940 982,465 950 980,432 905 960,437 930 975,445 950 998,420 883 940,403 915 985,355 890 950,360 920 975,368 940 992,340 935 1003,375 960 1010,384 980 1030,364 900 960,270 922 980,273 955 1020,276 985 1048,235 950 995,241 975 1025,305 940 990,312 965 1050,318 990 1060,321 1010 1090,92 920 946,162 930 1000,168 970 1050,175 1010 1090,182 1050 1130,189 1090 1165,195 1130 1200,201 1170 1235,207 1200 1270,210 1240 1290,97 967 1030,102 1010 1080,107 1050 1120,112 1090 1150,117 1120 1190,122 1150 1222,25 945 1010,28 980 1050,33 1020 1090,37 1060 1130,42 1100 1165,46 1140 1190,64 1038 1080,69 1060 1120,75 1100 1150,80 1125 1172,140 1030 1080,145 1060 1120,152 1100 1162,207 1002 1050,215 1070 1120,221 1100 1153,244 1020 1090,262 1085 1130,262 1110 1165,290 1064 1110,294 1095 1142,274 1167 1205,334 1092 1123,340 1128 1153,341 1163 1190,352 1188 1210,355 1200 1232,364 1240 1275,369 1255 1290,373 1275 1308,382 1320 1346,391 1367 1395,401 1421 1438,410 1470 1490,421 1522 1540,311 1381 1402,320 1430 1450,327 1482 1502,336 1534 1556,250 1540 1560,228 1392 1415,236 1442 1466,242 1490 1516,216 1295 1328,222 1340 1370,180 1213 1256,287 1242 1280,295 1285 1318,302 1330 1358,127 1248 1298,118 1258 1300,135 1302 1340,141 1350 1384,147 1408 1430,152 1447 1476,158 1496 1530,54 1315 1350,59 1358 1396,63 1408 1442,70 1508 1538,46 1205 1250,50 1215 1260,52 1240 1270,10 1215 1257,5 1235 1275,12 1255 1290,5 1090 1150,8 1150 1200,406 1087 1110,405 1122 1148,416 1166 1185,462 1016 1040,465 1030 1060,478 1102 1113,517 1075 1092,532 1020 1052,543 1060 1085,600 1015 1047,553 1105 1122,565 1147 1155,502 1203 1215,438 1255 1265,450 1272 1300,484 1284 1303,525 1273 1291,461 1315 1337,537 1310 1340,550 1350 1380,471 1357 1390,502 1375 1395,482 1404 1427,562 1396 1416,575 1444 1462,533 1457 1476,494 1455 1475,506 1506 1523,588 1495 1515,640 1393 1407,654 1438 1453,670 1484 1497,684 1533 1556,717 1387 1398,732 1432 1445,750 1476 1486,627 1348 1360,612 1308 1320,334 1326 1333,363 1404 1411,600 1270 1280,628 1278 1290,832 910 925,838 925 945,803 937 957,785 960 985,775 938 960,722 980 1005,732 1012 1040,748 1050 1070,682 1045 1078,672 985 1018,655 970 1000,613 1055 1085,622 1095 1108,693 1085 1110,700 1105 1130,850 970 990,860 985 1000,893 910 925,841 768 785,900 923 935,706 1128 1137');
draw('east', 'green', '44 431 460,34 455 490,20 480 520,10 500 540,55 480 500,45 500 545,62 495 530,72 470 515,98 497 525,88 520 555,75 535 575,60 555 595,48 570 615,30 560 595,15 580 612,127 502 545,112 530 570,98 560 600,82 590 627,138 533 575,122 560 605,108 590 635,90 625 657,160 525 565,172 540 580,150 560 600,182 572 610,165 600 640,140 620 648,212 578 610,190 605 640,168 633 670,150 660 690,130 680 705,115 690 720,100 720 745,82 738 765,240 566 610,256 615 660,235 650 690,325 598 632,395 604 635,375 628 655,360 640 668,283 636 680,315 646 680,292 660 705,275 685 720,262 705 740,248 730 762,315 685 722,398 647 680,378 672 705,355 705 735,335 730 760,418 670 712,448 690 730,398 728 768,367 746 782,415 757 785,390 780 810,437 784 820,463 803 837,330 795 830,362 820 855,315 832 870,338 858 895,374 872 910,312 768 800,290 795 825,272 820 850,253 845 875,258 788 820,240 812 840,222 835 860,204 858 882,194 808 840,176 830 860,157 855 886,275 750 780,220 793 808,173 675 705,215 675 710,200 700 735,180 725 750,160 740 770,225 690 720,208 715 740,190 732 758,213 725 758,130 776 806,105 815 845,82 833 867,60 870 895,47 885 910,20 910 945,60 765 795,40 790 820,23 800 832,75 650 685,60 670 695,45 680 715,30 695 720,18 710 740,5 730 750,25 620 650,10 635 665,40 948 975,92 946 968,142 945 958,123 905 930,196 937 949,110 988 1004,59 992 1008,8 995 1018,133 1024 1035,76 1036 1048,26 1040 1054,43 1080 1092,56 1080 1097,69 1112 1127,176 1141 1172,118 1174 1193,5 1208 1220,629 675 691,561 794 820,143 442 473,5 830 850,12 550 580,22 520 550,8 560 590');
add('green', 'M3122.8 855L3124.600 864');
add('blue', 'M2544.500 1180L2537 1186');
draw('east', 'purple', '75 127 147,88 166 190,67 217 239,122 270 292,114 315 347,34 329 360,22 382 418,167 388 403,203 447 461,219 187 200,263 231 243,274 276 289,294 342 351,440 325 342,353 403 416,2 300 312');
```
